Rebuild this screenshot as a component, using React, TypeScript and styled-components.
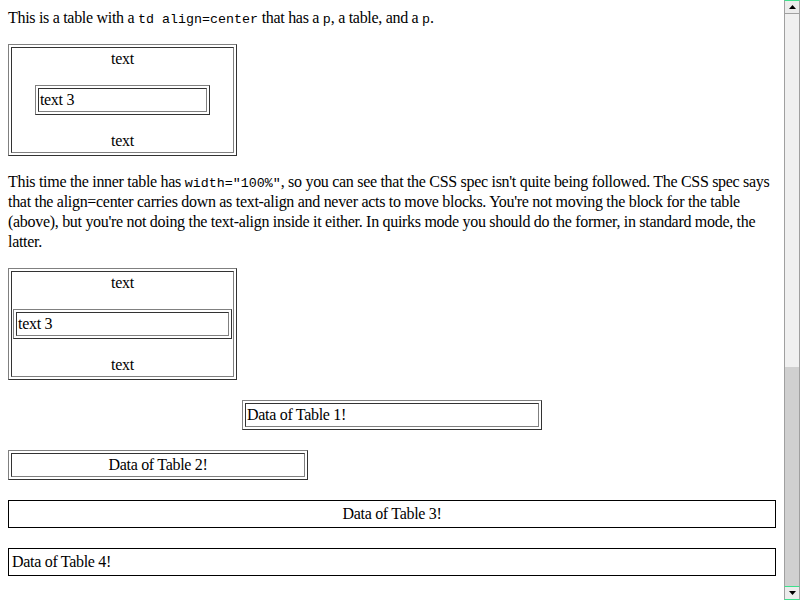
import React from "react";
import styled, { createGlobalStyle } from "styled-components";

const Global = createGlobalStyle`
  html, body { margin: 0; padding: 0; background: #fff; }
  body { font-family: "Liberation Serif", "Times New Roman", serif; font-size: 16px; color: #000; overflow: hidden; }
`;

const Page = styled.div`
  display: flex;
  width: 800px;
  height: 600px;
  overflow: hidden;
`;

const Content = styled.div`
  flex: 1;
  padding: 8px;
  line-height: 20px;
  letter-spacing: -0.3px;
`;

const Para = styled.p<{ $top?: number }>`
  margin: ${(p) => p.$top ?? 0}px 0 16px;
  line-height: 20px;
`;

const Code = styled.code`
  font-family: "Liberation Mono", "Courier New", monospace;
  font-size: 13.33px;
  letter-spacing: 0;
  line-height: 1;
`;

const BevelTable = styled.table<{ $width: string; $center?: boolean; $top?: number }>`
  width: ${(p) => p.$width};
  border: 1px solid;
  border-color: #808080 #333 #333 #808080;
  border-spacing: 2px;
  margin: ${(p) => p.$top ?? 0}px ${(p) => (p.$center ? "auto" : "0")} 0;
  font-size: 16px;
  line-height: 20px;
`;

const BevelCell = styled.td<{ $align?: string }>`
  border: 1px solid;
  border-color: #333 #808080 #808080 #333;
  padding: 1px;
  text-align: ${(p) => p.$align ?? "left"};
  vertical-align: middle;
`;

const CellPara = styled.p<{ $top?: number; $bottom?: number }>`
  margin: ${(p) => p.$top ?? 0}px 0 ${(p) => p.$bottom ?? 0}px;
  line-height: 20px;
`;

const PlainTable = styled.table<{ $top?: number }>`
  width: 100%;
  border: 1px solid #000;
  border-spacing: 2px;
  margin-top: ${(p) => p.$top ?? 0}px;
  font-size: 16px;
  line-height: 20px;
`;

const PlainCell = styled.td<{ $align?: string }>`
  padding: 1px;
  text-align: ${(p) => p.$align ?? "left"};
`;

const ScrollBar = styled.div`
  width: 16px;
  height: 600px;
  display: flex;
  flex-direction: column;
  background: #f0f0f0;
  box-sizing: border-box;
`;

const ArrowButton = styled.div<{ $down?: boolean }>`
  height: 14px;
  box-sizing: border-box;
  border-left: 1px solid #a0a0a0;
  border-right: 1px solid #a0a0a0;
  border-top: 1px solid #3ee08c;
  border-bottom: 1px solid ${(p) => (p.$down ? "#3ee08c" : "#a0a0a0")};
  background: #ececec;
  display: flex;
  align-items: center;
  justify-content: center;
`;

const Track = styled.div`
  flex: 1;
  display: flex;
  flex-direction: column;
  border-left: 1px solid #a0a0a0;
  border-right: 1px solid #a0a0a0;
  background: #f0f0f0;
`;

const TrackGap = styled.div`
  flex: 1;
`;

const Thumb = styled.div`
  height: 219px;
  background: #d0d0d0;
`;

const Arrow = ({ down }: { down?: boolean }) => (
  <svg width="7" height="4" viewBox="0 0 7 4">
    <polygon points={down ? "0,0 7,0 3.5,4" : "0,4 7,4 3.5,0"} fill="#000" />
  </svg>
);

export default function App() {
  return (
    <Page>
      <Global />
      <Content>
        <Para>
          This is a table with a <Code>td align=center</Code> that has a <Code>p</Code>, a table, and a <Code>p</Code>.
        </Para>
        <BevelTable $width="229px">
          <tbody>
            <tr>
              <BevelCell $align="center">
                <CellPara $bottom={16}>text</CellPara>
                <BevelTable $width="80%" $center>
                  <tbody>
                    <tr>
                      <BevelCell>text 3</BevelCell>
                    </tr>
                  </tbody>
                </BevelTable>
                <CellPara $top={16}>text</CellPara>
              </BevelCell>
            </tr>
          </tbody>
        </BevelTable>
        <Para $top={16}>
          This time the inner table has <Code>width="100%"</Code>, so you can see that the CSS spec isn't quite being followed. The CSS spec says that the align=center carries down as text-align and never acts to move blocks. You're not moving the block for the table (above), but you're not doing the text-align inside it either. In quirks mode you should do the former, in standard mode, the latter.
        </Para>
        <BevelTable $width="229px">
          <tbody>
            <tr>
              <BevelCell $align="center">
                <CellPara $bottom={16}>text</CellPara>
                <BevelTable $width="100%">
                  <tbody>
                    <tr>
                      <BevelCell>text 3</BevelCell>
                    </tr>
                  </tbody>
                </BevelTable>
                <CellPara $top={16}>text</CellPara>
              </BevelCell>
            </tr>
          </tbody>
        </BevelTable>
        <BevelTable $width="300px" $center $top={20}>
          <tbody>
            <tr>
              <BevelCell>Data of Table 1!</BevelCell>
            </tr>
          </tbody>
        </BevelTable>
        <BevelTable $width="300px" $top={20}>
          <tbody>
            <tr>
              <BevelCell $align="center">Data of Table 2!</BevelCell>
            </tr>
          </tbody>
        </BevelTable>
        <PlainTable $top={20}>
          <tbody>
            <tr>
              <PlainCell $align="center">Data of Table 3!</PlainCell>
            </tr>
          </tbody>
        </PlainTable>
        <PlainTable $top={20}>
          <tbody>
            <tr>
              <PlainCell>Data of Table 4!</PlainCell>
            </tr>
          </tbody>
        </PlainTable>
      </Content>
      <ScrollBar>
        <ArrowButton>
          <Arrow />
        </ArrowButton>
        <Track>
          <TrackGap />
          <Thumb />
        </Track>
        <ArrowButton $down>
          <Arrow down />
        </ArrowButton>
      </ScrollBar>
    </Page>
  );
}
